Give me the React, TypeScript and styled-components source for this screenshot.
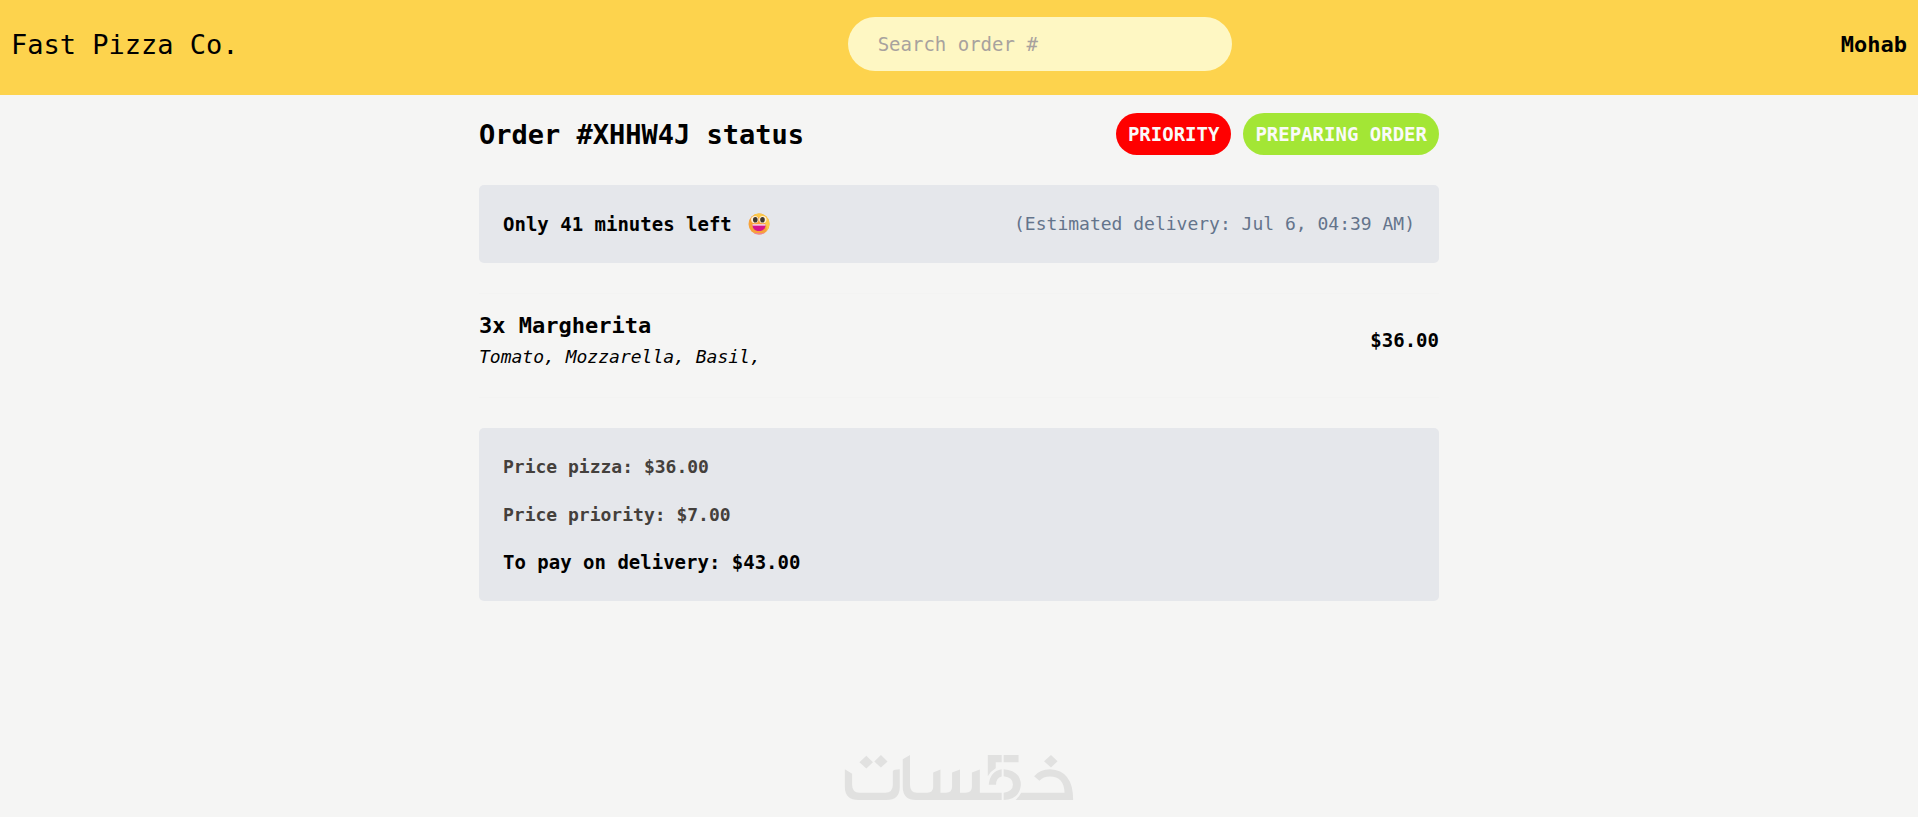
import React from "react";
import styled, { createGlobalStyle } from "styled-components";

const GlobalStyle = createGlobalStyle`
  * { box-sizing: border-box; }
  body { margin: 0; background: #f5f5f4; color: #000; }
  body, input { font-family: "DejaVu Sans Mono", "Liberation Mono", monospace; }
  h1, h2, p, ul { margin: 0; padding: 0; }
`;

const Page = styled.div`
  min-height: 100vh;
  display: flex;
  flex-direction: column;
`;

const Header = styled.header`
  display: flex;
  align-items: center;
  justify-content: space-between;
  padding: 17px 11px 24px;
  background: #fdd34d;
`;

const Brand = styled.a`
  padding-top: 2px;
  color: inherit;
  text-decoration: none;
  font-size: 27px;
  line-height: 36px;
`;

const Search = styled.input`
  width: 384px;
  height: 54px;
  padding: 0 30px;
  border: 0;
  border-radius: 27px;
  background: #fef7c3;
  font-size: 19px;
  &::placeholder { color: #a8a29e; opacity: 1; }
`;

const UserName = styled.p`
  padding-top: 2px;
  font-size: 22px;
  line-height: 28px;
  font-weight: 700;
`;

const Main = styled.main`
  width: 100%;
  max-width: 960px;
  margin: 0 auto;
  padding: 18px 0 30px;
  display: flex;
  flex-direction: column;
  gap: 30px;
`;

const TitleRow = styled.div`
  display: flex;
  align-items: center;
  justify-content: space-between;
`;

const Title = styled.h1`
  padding-top: 2px;
  font-size: 27px;
  line-height: 36px;
  font-weight: 700;
`;

const Badges = styled.div`
  display: flex;
  gap: 12px;
`;

const Badge = styled.span<{ $color: string }>`
  padding: 6px 12px;
  border-radius: 21px;
  background: ${(p) => p.$color};
  color: #fafaf9;
  font-size: 19px;
  line-height: 30px;
  font-weight: 700;
  text-transform: uppercase;
`;

const Panel = styled.section<{ $row?: boolean }>`
  display: flex;
  flex-direction: ${(p) => (p.$row ? "row" : "column")};
  align-items: ${(p) => (p.$row ? "center" : "stretch")};
  justify-content: space-between;
  gap: 19px;
  padding: 24px;
  border-radius: 5px;
  background: #e5e7eb;
`;

const Strong = styled.p`
  display: flex;
  align-items: center;
  gap: 16px;
  font-size: 19px;
  line-height: 30px;
  font-weight: 700;
`;

const Estimate = styled.p`
  font-size: 18px;
  line-height: 30px;
  color: #64748b;
`;

const Items = styled.ul`
  list-style: none;
  border-top: 1px solid #f3f3f2;
  border-bottom: 1px solid #f3f3f2;
`;

const Item = styled.li`
  display: flex;
  align-items: center;
  justify-content: space-between;
  padding: 15px 0 26px;
`;

const ItemName = styled.h2`
  font-size: 22px;
  line-height: 33px;
  font-weight: 700;
`;

const Ingredients = styled.p`
  font-size: 18px;
  line-height: 29px;
  font-style: italic;
`;

const PriceLine = styled.p`
  font-size: 18px;
  line-height: 29px;
  font-weight: 700;
  color: #44403c;
`;

const Total = styled(Strong)`
  line-height: 29px;
`;

const Footer = styled.footer`
  margin-top: auto;
  padding-bottom: 17px;
  display: flex;
  justify-content: center;
`;

const Smiley = () => (
  <svg width="22" height="22" viewBox="0 0 22 22" role="img" aria-label="Grinning face">
    <circle cx="11" cy="11" r="10.5" fill="#f7a23a" />
    <path d="M5 2.500A10.500 10.500 0 0 1 21.500 11c0 3-1.500 6-3 7.500C20 11 14 3.500 5 2.500Z" fill="#fcc94a" />
    <ellipse cx="6.800" cy="6.600" rx="3.700" ry="3.700" fill="#fff1d6" />
    <ellipse cx="14.800" cy="6.600" rx="3.700" ry="3.700" fill="#fff1d6" />
    <ellipse cx="7.300" cy="6.700" rx="2.300" ry="2.800" fill="#40372e" />
    <ellipse cx="14.500" cy="6.700" rx="2.300" ry="2.800" fill="#40372e" />
    <path d="M4.500 11.500h13c0 4-2 6.500-6.500 6.500s-6.500-2.500-6.500-6.500Z" fill="#d5128d" />
    <path d="M4.500 11.200h13v1.400h-13Z" fill="#f8e6ee" />
    <path d="M5 19.500c3.500 2.600 8.500 2.600 12 0-4 1-8 1-12 0Z" fill="#ef7fa4" />
  </svg>
);

const Watermark = () => (
  <svg width="230" height="45" viewBox="42 44 690 136" fill="#e1e1e0" role="img" aria-label="خمسات">
    <path d="M42 87 64 101V135Q64 158 86 158H164Q187 158 187 135V93Q190 87 208 87V140Q208 180 168 180H84Q42 180 42 140Z" />
    <path d="M107 46 127 66 107 85 86 66ZM151 44 171 64 151 82 131 64Z" />
    <path d="M217 57 239 44V135Q239 158 260 158H291Q309 158 309 140V97L331 88V158H348Q366 158 366 141V97L390 88V158H407Q426 158 426 141V97L450 88V158H516V180H257Q217 180 217 140Z" />
    <path d="M474 44H516V66H498V84Q484 92 474 108ZM522 44H567V66H522Z" />
    <path d="M516 87V109Q499 113 499 134H477Q480 94 516 87ZM522 87Q574 92 574 135Q570 178 522 180V158Q550 154 550 133Q550 111 522 108Z" />
    <path d="M665 44 685 63 665 82 644 63ZM614 108Q632 87 662 87Q732 90 732 180H558Q568 171 575 158H706Q704 109 662 109Q641 109 630 122Z" />
  </svg>
);

export default function App() {
  return (
    <Page>
      <GlobalStyle />
      <Header>
        <Brand href="/">Fast Pizza Co.</Brand>
        <Search type="text" placeholder="Search order #" aria-label="Search order #" />
        <UserName>Mohab</UserName>
      </Header>
      <Main>
        <TitleRow>
          <Title>Order #XHHW4J status</Title>
          <Badges>
            <Badge $color="#ff0000">Priority</Badge>
            <Badge $color="#a3e635">Preparing order</Badge>
          </Badges>
        </TitleRow>
        <Panel $row>
          <Strong>
            Only 41 minutes left <Smiley />
          </Strong>
          <Estimate>(Estimated delivery: Jul 6, 04:39 AM)</Estimate>
        </Panel>
        <Items>
          <Item>
            <div>
              <ItemName>3x Margherita</ItemName>
              <Ingredients>Tomato, Mozzarella, Basil, </Ingredients>
            </div>
            <Strong>$36.00</Strong>
          </Item>
        </Items>
        <Panel>
          <PriceLine>Price pizza: $36.00</PriceLine>
          <PriceLine>Price priority: $7.00</PriceLine>
          <Total>To pay on delivery: $43.00</Total>
        </Panel>
      </Main>
      <Footer>
        <Watermark />
      </Footer>
    </Page>
  );
}
